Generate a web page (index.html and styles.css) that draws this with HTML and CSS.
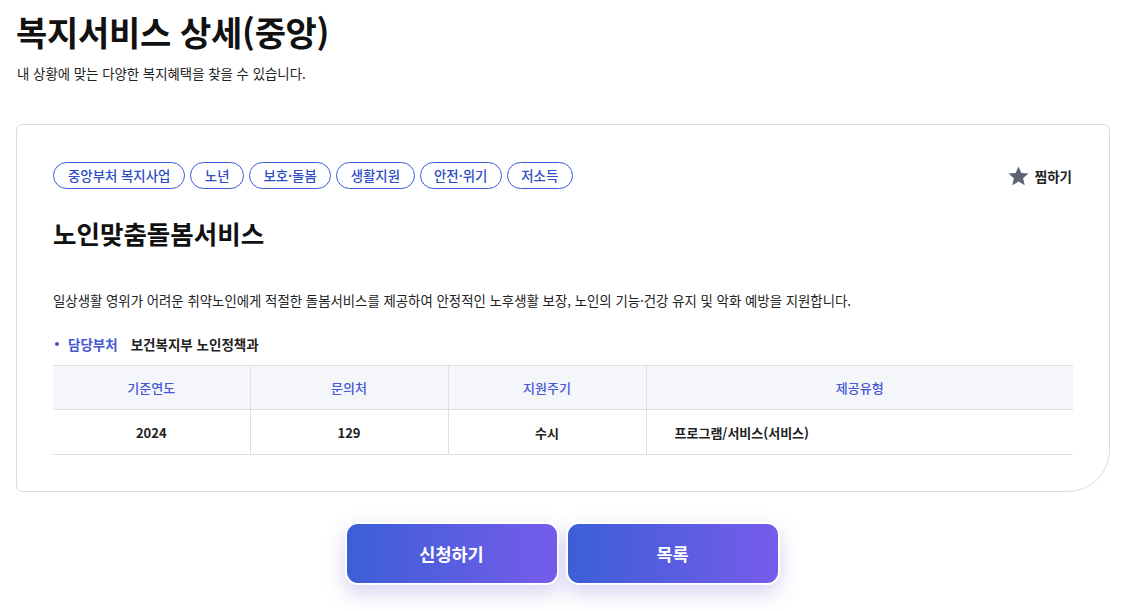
FILE: index.html
```html
<!DOCTYPE html>
<html lang="ko">
<head>
  <meta charset="UTF-8" />
  <meta name="viewport" content="width=device-width, initial-scale=1.0" />
  <title>복지서비스 상세(중앙)</title>
  <link rel="stylesheet" href="styles.css">
</head>
<body>
  <div class="page">
    <h1 class="page-title">복지서비스 상세(중앙)</h1>
    <p class="page-desc">내 상황에 맞는 다양한 복지혜택을 찾을 수 있습니다.</p>

    <div class="card">
      <div class="card-top">
        <ul class="tags">
          <li>중앙부처 복지사업</li>
          <li>노년</li>
          <li>보호·돌봄</li>
          <li>생활지원</li>
          <li>안전·위기</li>
          <li>저소득</li>
        </ul>
        <button class="bookmark">
          <svg width="23" height="22" viewBox="0 0 24 24"><path d="M12 1.5l3.1 7.2 7.8.7-5.9 5.1 1.8 7.6L12 18.1l-6.8 4 1.8-7.6-5.9-5.1 7.8-.7z" fill="#5f6275"/></svg>
          <span>찜하기</span>
        </button>
      </div>

      <h2 class="service-name">노인맞춤돌봄서비스</h2>
      <p class="service-desc">일상생활 영위가 어려운 취약노인에게 적절한 돌봄서비스를 제공하여 안정적인 노후생활 보장, 노인의 기능·건강 유지 및 악화 예방을 지원합니다.</p>

      <div class="dept">
        <span class="dept-label">담당부처</span>
        <span class="dept-value">보건복지부 노인정책과</span>
      </div>

      <table class="info">
        <thead>
          <tr>
            <th class="c1">기준연도</th>
            <th class="c2">문의처</th>
            <th class="c3">지원주기</th>
            <th>제공유형</th>
          </tr>
        </thead>
        <tbody>
          <tr>
            <td>2024</td>
            <td>129</td>
            <td>수시</td>
            <td class="left">프로그램/서비스(서비스)</td>
          </tr>
        </tbody>
      </table>
    </div>

    <div class="actions">
      <button class="btn">신청하기</button>
      <button class="btn">목록</button>
    </div>
  </div>
</body>
</html>
```

FILE: styles.css
```css
* {
  box-sizing: border-box;
}
body {
  margin: 0;
  font-family: "Noto Sans CJK KR", "Noto Sans", sans-serif;
  color: #111;
  background: #fff;
}
.page {
  padding: 10px 14px 40px 16px;
}
.page-title {
  margin: 0;
  font-size: 34px;
  font-weight: 700;
  line-height: 44px;
  letter-spacing: -0.3px;
}
.page-desc {
  margin: 10px 0 0 1px;
  font-size: 13.4px;
  line-height: 18px;
  color: #222;
}
.card {
  margin-top: 42px;
  border: 1px solid #dcdcdc;
  border-radius: 6px 6px 42px 6px;
  padding: 37px 36px 36px 36px;
}
.card-top {
  display: flex;
  justify-content: space-between;
  align-items: center;
}
.tags {
  display: flex;
  gap: 5px;
  list-style: none;
  margin: 0;
  padding: 0;
}
.tags li {
  height: 27px;
  line-height: 25px;
  padding: 0 13.5px;
  border: 1px solid #3a5ad9;
  border-radius: 14px;
  color: #2e4cc6;
  font-size: 13.4px;
  font-weight: 500;
}
.tags li:first-child {
  padding: 0 14px;
}
.bookmark {
  display: flex;
  align-items: center;
  gap: 5px;
  border: none;
  background: none;
  padding: 0;
  margin-right: 1px;
  font-family: inherit;
  font-size: 13.5px;
  font-weight: 700;
  color: #222;
}
.service-name {
  margin: 27px 0 0;
  font-size: 25.5px;
  font-weight: 700;
  line-height: 34px;
}
.service-desc {
  margin: 40px 0 0;
  font-size: 13.4px;
  line-height: 20px;
  color: #222;
}
.dept {
  display: flex;
  align-items: center;
  margin-top: 24px;
  font-size: 13.5px;
  font-weight: 700;
  line-height: 20px;
}
.dept-label {
  position: relative;
  padding-left: 15px;
  color: #4758d6;
  margin-right: 13px;
}
.dept-label::before {
  content: "";
  position: absolute;
  left: 2px;
  top: 8px;
  width: 4px;
  height: 4px;
  border-radius: 50%;
  background: #4758d6;
}
.dept-value {
  color: #222;
}
.info {
  width: 100%;
  margin-top: 11px;
  border-collapse: collapse;
  font-size: 13px;
}
.info th,
.info td {
  border-top: 1px solid #dfdfe3;
  border-bottom: 1px solid #dfdfe3;
  border-left: 1px solid #dfdfe3;
  text-align: center;
}
.info th:first-child,
.info td:first-child {
  border-left: none;
}
.info th {
  height: 44px;
  background: #f5f6fa;
  color: #4758d6;
  font-weight: 500;
}
.info td {
  height: 45px;
  font-weight: 700;
  color: #222;
}
.info .c1 {
  width: 197px;
}
.info .c2,
.info .c3 {
  width: 198px;
}
.info td.left {
  text-align: left;
  padding-left: 28px;
}
.actions {
  display: flex;
  justify-content: center;
  gap: 7px;
  margin-top: 30px;
  padding-right: 2px;
}
.btn {
  width: 214px;
  height: 63px;
  border: 2px solid #fff;
  border-radius: 13px;
  background: linear-gradient(90deg, #3b5fd6, #765ceb);
  color: #fff;
  font-family: inherit;
  font-size: 17.5px;
  font-weight: 700;
  box-shadow: 0 8px 20px rgba(90, 80, 200, 0.25);
}
```
